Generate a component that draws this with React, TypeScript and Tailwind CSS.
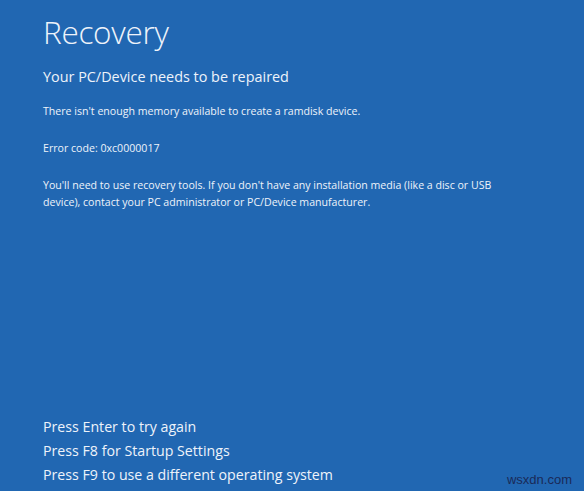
export default function App() {
  return (
    <div
      className="relative flex h-[491px] w-[584px] flex-col overflow-hidden bg-[#2167b2] pl-[43px] text-[#eef3fa]"
      style={{ fontFamily: '"Open Sans", "Noto Sans", sans-serif' }}
    >
      <h1 className="mt-[12px] text-[31.5px] leading-[40px] font-light tracking-[-0.3px]">Recovery</h1>
      <h2 className="mt-[15px] text-[14.4px] leading-[20px]">Your PC/Device needs to be repaired</h2>
      <div className="mt-[16px] flex flex-col gap-[20px] text-[10.6px] leading-[17px]">
        <p>There isn't enough memory available to create a ramdisk device.</p>
        <p>Error code: 0xc0000017</p>
        <p>
          You'll need to use recovery tools. If you don't have any installation media (like a disc or USB
          <br />
          device), contact your PC administrator or PC/Device manufacturer.
        </p>
      </div>
      <div className="mt-auto mb-[4px] flex flex-col text-[14.2px] leading-[24px]">
        <p>Press Enter to try again</p>
        <p>Press F8 for Startup Settings</p>
        <p>Press F9 to use a different operating system</p>
      </div>
      <span
        className="absolute right-[12px] bottom-[2px] text-[13px] text-[#1a2a58]"
        style={{ fontFamily: '"Liberation Sans", Arial, sans-serif' }}
      >
        wsxdn.com
      </span>
    </div>
  );
}
